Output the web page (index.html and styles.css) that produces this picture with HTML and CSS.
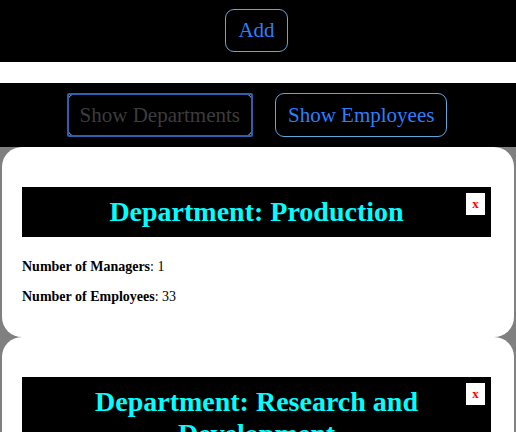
FILE: index.html
```html
<!DOCTYPE html>
<html>
<head>
<meta charset="utf-8">
<link rel="stylesheet" href="styles.css">
</head>
<body>
<div class="topbar">
  <button class="btn btn-add">Add</button>
</div>
<div class="spacer"></div>
<div class="navbar">
  <button class="btn btn-nav is-active">Show Departments</button>
  <button class="btn btn-nav">Show Employees</button>
</div>
<div class="list">
  <div class="card">
    <div class="card-head">
      <h2 class="card-title">Department: Production</h2>
      <button class="close">x</button>
    </div>
    <p class="stat"><b>Number of Managers</b>: 1</p>
    <p class="stat"><b>Number of Employees</b>: 33</p>
  </div>
  <div class="card">
    <div class="card-head">
      <h2 class="card-title">Department: Research and Development</h2>
      <button class="close">x</button>
    </div>
    <p class="stat"><b>Number of Managers</b>: 2</p>
    <p class="stat"><b>Number of Employees</b>: 41</p>
  </div>
</div>
</body>
</html>
```
FILE: styles.css
```css
html, body {
  margin: 0;
  padding: 0;
}
body {
  font-family: "Liberation Serif", "Times New Roman", serif;
  background: #808080;
}
.topbar {
  background: #000;
  display: flex;
  justify-content: center;
  padding: 9px 3px 10px 0;
}
.spacer {
  background: #fff;
  height: 21px;
}
.navbar {
  background: #000;
  display: flex;
  justify-content: center;
  gap: 22px;
  padding: 10px 2px 10px 0;
}
.btn {
  font-family: "Liberation Serif", "Times New Roman", serif;
  font-size: 21px;
  line-height: 23px;
  background: #000;
  color: #2b7fff;
  border: 1px solid #5ea8dc;
  border-radius: 9px;
  margin: 0;
}
.btn-add {
  padding: 9px 12px;
}
.btn-nav {
  padding: 9.5px 12px;
}
.btn-nav.is-active {
  position: relative;
  color: #3c3c3c;
  outline: none;
}
.btn-nav.is-active::after {
  content: "";
  position: absolute;
  inset: -1px;
  border: 2px solid #2c5fae;
  border-radius: 2px;
  pointer-events: none;
}
.list {
  padding: 0 2px;
}
.card {
  background: #fff;
  border-radius: 20px;
  padding: 20px 23px 18px 20px;
}
.card-head {
  position: relative;
  background: #000;
  margin: 20px 0 22px;
}
.card-title {
  margin: 0;
  padding: 9px 30px;
  font-size: 28px;
  line-height: 32px;
  font-weight: bold;
  color: #00ffff;
  text-align: center;
}
.close {
  position: absolute;
  top: 6px;
  right: 6px;
  width: 19px;
  height: 22px;
  padding: 0;
  border: none;
  background: #fff;
  color: #ff0000;
  font-family: "Liberation Serif", serif;
  font-weight: bold;
  font-size: 13px;
  line-height: 22px;
}
.stat {
  margin: 14px 0;
  font-size: 14px;
  line-height: 16px;
  color: #000;
}
```
